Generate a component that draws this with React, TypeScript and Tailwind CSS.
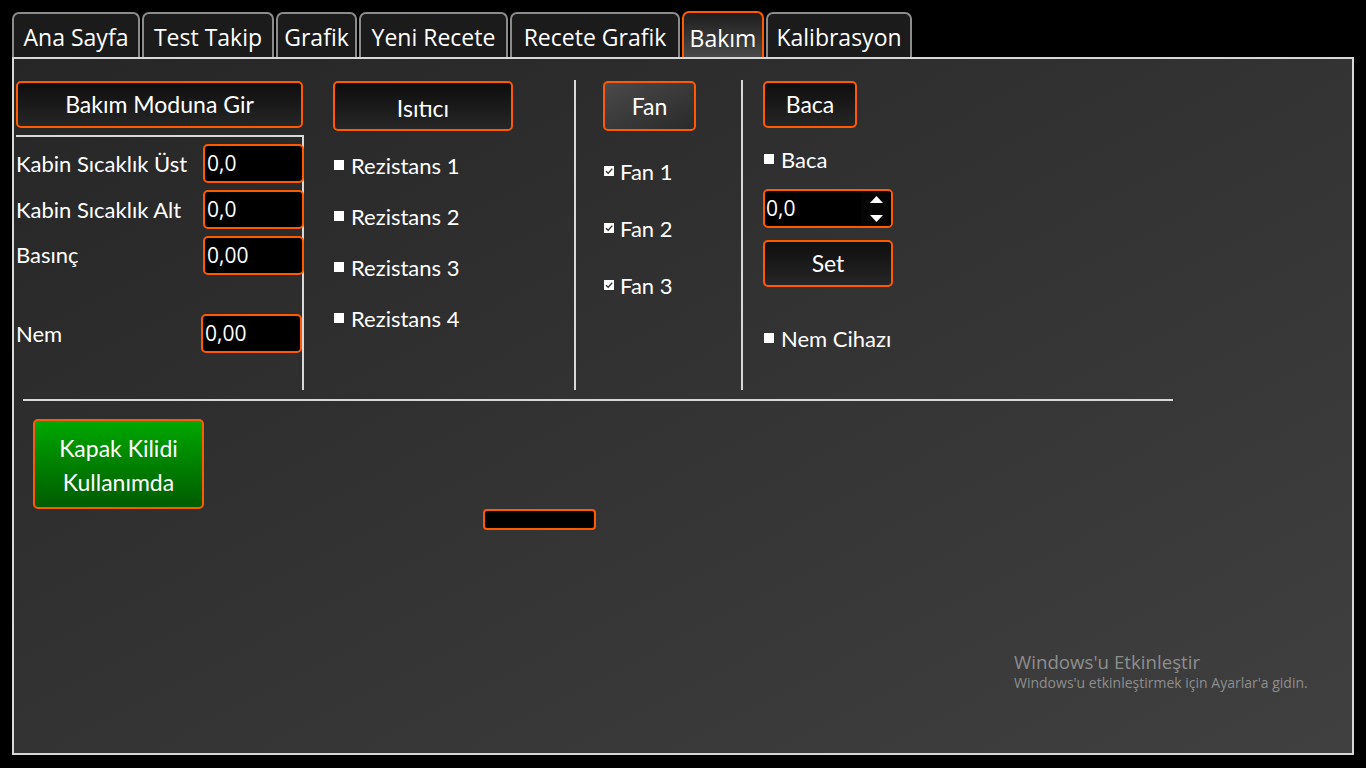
import React from "react";

const tabs = [
  { label: "Ana Sayfa", w: "w-[128px]" },
  { label: "Test Takip", w: "w-[132px]" },
  { label: "Grafik", w: "w-[81px]" },
  { label: "Yeni Recete", w: "w-[149px]" },
  { label: "Recete Grafik", w: "w-[170px]" },
  { label: "Bakım", w: "w-[82px]" },
  { label: "Kalibrasyon", w: "w-[146px]" },
];

const gill = { fontFamily: "Lato, 'Open Sans', sans-serif" };

const Box = ({ checked }: { checked?: boolean }) => (
  <span className="inline-flex items-center justify-center w-[10px] h-[10px] bg-white shrink-0">
    {checked && (
      <svg width="10" height="10" viewBox="0 0 10 10">
        <path d="M2 5.2 L4.2 7.3 L8.3 2.6" stroke="#333" strokeWidth="1.4" fill="none" />
      </svg>
    )}
  </span>
);

const OrangeBtn = ({ label, className }: { label: string; className: string }) => (
  <div
    className={`flex items-center justify-center border-2 border-[#ff5a00] rounded-[5px] text-white text-[23px] ${className}`}
  >
    {label}
  </div>
);

const Field = ({ value, className = "" }: { value: string; className?: string }) => (
  <div
    className={`flex items-center h-[39px] w-[101px] bg-black border-2 border-[#ff5a00] rounded-[5px] pl-[2px] text-white text-[21px] font-['Open_Sans',sans-serif] ${className}`}
  >
    {value}
  </div>
);

export default function App() {
  return (
    <div className="w-[1366px] h-[768px] bg-black overflow-hidden relative" style={gill}>
      {/* Tabs */}
      <div className="flex items-end gap-[2px] pl-[12px] pt-[11px] h-[57px]">
        {tabs.map((t) => (
          <div
            key={t.label}
            className={
              t.label === "Bakım"
                ? `${t.w} h-[46px] flex justify-center items-start pt-[8px] border-2 border-b-0 border-[#ff5a00] rounded-t-[7px] bg-gradient-to-b from-[#1e1e1e] to-[#4a4a4a] text-white text-[23px] font-['Open_Sans',sans-serif]`
                : `${t.w} h-[45px] flex justify-center items-center pt-[4px] border-2 border-b-0 border-[#8c8c8c] rounded-t-[7px] bg-[#1b1b1b] text-white text-[23px] font-['Open_Sans',sans-serif]`
            }
          >
            {t.label}
          </div>
        ))}
      </div>

      {/* Panel */}
      <div className="relative ml-[12px] w-[1342px] h-[698px] border-2 border-[#d8d8d8] bg-gradient-to-br from-[#262626] via-[#333333] to-[#404040]">
        <div className="flex items-start pt-[22px] pl-[2px]">
          {/* Column 1 */}
          <div className="w-[288px] flex flex-col">
            <OrangeBtn
              label="Bakım Moduna Gir"
              className="h-[47px] w-[287px] bg-gradient-to-b from-[#0e0e0e] to-[#262626]"
            />
            <div className="mt-[7px] h-[255px] border-t-2 border-r-2 border-[#d8d8d8] pt-[7px] text-white text-[22px]">
              <div className="flex items-center justify-between">
                <span>Kabin Sıcaklık Üst</span>
                <Field value="0,0" className="-mr-[2px]" />
              </div>
              <div className="flex items-center justify-between mt-[7px]">
                <span>Kabin Sıcaklık Alt</span>
                <Field value="0,0" className="-mr-[2px]" />
              </div>
              <div className="flex items-center justify-between mt-[7px]">
                <span className="-mt-[2px]">Basınç</span>
                <Field value="0,00" className="-mr-[2px]" />
              </div>
              <div className="flex items-center justify-between mt-[39px]">
                <span>Nem</span>
                <Field value="0,00" className="w-[99px]" />
              </div>
            </div>
          </div>

          {/* Column 2 */}
          <div className="ml-[29px] w-[241px] h-[310px] flex flex-col">
            <OrangeBtn
              label="Isıtıcı"
              className="h-[50px] w-[180px] bg-gradient-to-b from-[#0e0e0e] to-[#262626] pt-[4px]"
            />
            <div className="flex flex-col gap-[25px] mt-[21px] text-white text-[22px]">
              {[1, 2, 3, 4].map((n) => (
                <div key={n} className="flex items-center gap-[7px] h-[26px] pl-[1px]">
                  <Box />
                  <span>Rezistans {n}</span>
                </div>
              ))}
            </div>
          </div>
          <div className="w-[2px] h-[310px] bg-[#d8d8d8] -mt-[1px]" />

          {/* Column 3 */}
          <div className="ml-[27px] w-[138px] h-[310px] flex flex-col">
            <OrangeBtn
              label="Fan"
              className="h-[50px] w-[93px] bg-gradient-to-br from-[#4a4a4a] to-[#2a2a2a]"
            />
            <div className="flex flex-col gap-[31px] mt-[27px] text-white text-[22px]">
              {[1, 2, 3].map((n) => (
                <div key={n} className="flex items-center gap-[6px] h-[26px] pl-[1px]">
                  <Box checked />
                  <span>Fan {n}</span>
                </div>
              ))}
            </div>
          </div>
          <div className="w-[2px] h-[310px] bg-[#d8d8d8] -mt-[1px]" />

          {/* Column 4 */}
          <div className="ml-[20px] flex flex-col text-white text-[22px]">
            <OrangeBtn
              label="Baca"
              className="h-[47px] w-[94px] bg-gradient-to-b from-[#0e0e0e] to-[#262626]"
            />
            <div className="flex items-center gap-[7px] h-[26px] mt-[18px] pl-[1px]">
              <Box />
              <span>Baca</span>
            </div>
            <div className="mt-[17px] flex h-[39px] w-[130px] border-2 border-[#ff5a00] rounded-[5px] bg-black overflow-hidden">
              <div className="flex-1 flex items-center pl-[1px] text-[21px] font-['Open_Sans',sans-serif]">
                0,0
              </div>
              <div className="w-[30px] flex flex-col items-center justify-center gap-[12px] bg-[#050505]">
                <svg width="13" height="7" viewBox="0 0 13 7">
                  <path d="M6.5 0 L13 7 L0 7 Z" fill="#fff" />
                </svg>
                <svg width="13" height="7" viewBox="0 0 13 7">
                  <path d="M0 0 L13 0 L6.5 7 Z" fill="#fff" />
                </svg>
              </div>
            </div>
            <OrangeBtn
              label="Set"
              className="mt-[12px] h-[47px] w-[130px] bg-gradient-to-b from-[#0e0e0e] to-[#262626]"
            />
            <div className="flex items-center gap-[7px] h-[26px] mt-[38px] pl-[1px]">
              <Box />
              <span>Nem Cihazı</span>
            </div>
          </div>
        </div>

        {/* Divider */}
        <div className="ml-[9px] mt-[8px] w-[1150px] h-[2px] bg-[#d8d8d8]" />

        {/* Bottom row */}
        <div className="flex items-start mt-[18px] ml-[19px]">
          <div className="w-[171px] h-[90px] border-2 border-[#ff5a00] rounded-[5px] bg-gradient-to-b from-[#00a800] to-[#005c00] flex flex-col items-center justify-center text-white text-[23px] leading-[34px] pt-[2px]">
            <span>Kapak Kilidi</span>
            <span>Kullanımda</span>
          </div>
          <div className="ml-[279px] mt-[90px] w-[113px] h-[21px] bg-black border-2 border-[#ff5a00] rounded-[4px]" />
        </div>

        {/* Windows watermark */}
        <div className="absolute left-[1000px] top-[591px] text-[#8e8e8e] font-['Open_Sans',sans-serif]">
          <div className="text-[18.7px] leading-[24px]">Windows'u Etkinleştir</div>
          <div className="text-[14px] leading-[18px]">Windows'u etkinleştirmek için Ayarlar'a gidin.</div>
        </div>
      </div>
    </div>
  );
}
